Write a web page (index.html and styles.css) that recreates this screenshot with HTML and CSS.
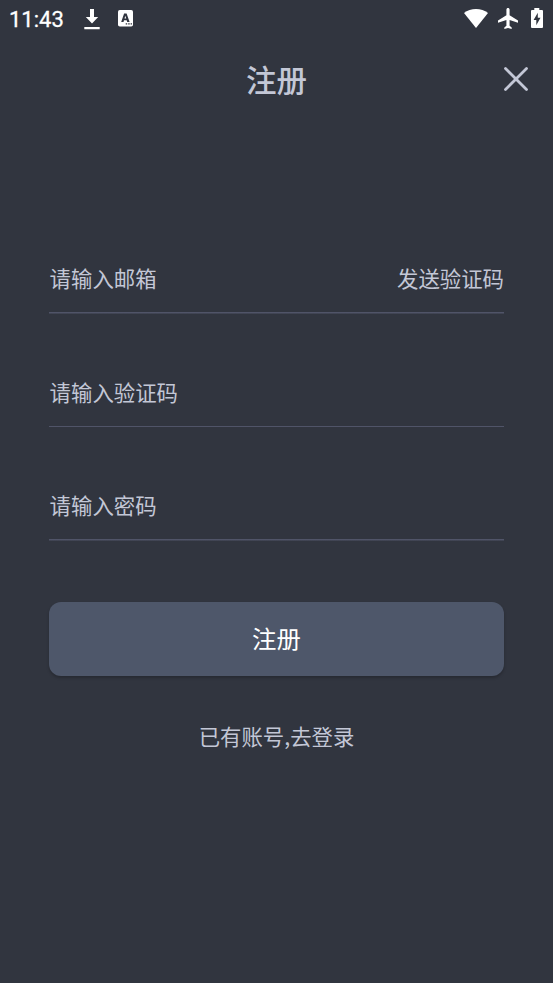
FILE: index.html
```html
<!DOCTYPE html>
<html lang="zh-CN">
<head>
<meta charset="utf-8">
<title>注册</title>
<link rel="stylesheet" href="styles.css">
</head>
<body>
<div class="status">
  <span class="time">11:43</span>
  <svg class="download" width="16" height="21" viewBox="0 0 16 21"><path d="M6 0h4v8h4.200L8 14.500 1.800 8H6zM.3 18h15.400v2.200H.3z"/></svg>
  <svg class="input-badge" width="15" height="17" viewBox="0 0 15 17"><rect width="15" height="16.600" rx="1.800"/><path class="cut" fill-rule="evenodd" d="M6.100 3.500h2.500l3 8.500H9.200l-.5-1.700H6L5.500 12H3.200zM7.300 5.800L6.500 8.600h1.700z"/><path class="cut" d="M7.700 13.300h1.500v1.300H7.700zm2.500 0h1.500v1.300h-1.500zm2.400 0H14v1.300h-1.400z"/></svg>
  <svg class="wifi" width="24" height="19" viewBox="0 0 24 19"><path d="M0 4C6.500-1.200 17.500-1.200 24 4L12 19z"/></svg>
  <svg class="plane" width="20" height="21" viewBox="2 2 19 20" preserveAspectRatio="none"><path d="M21 16v-2l-8-5V3.500C13 2.670 12.330 2 11.500 2S10 2.670 10 3.500V9l-8 5v2l8-2.500V19l-2 1.500V22l3.500-1 3.500 1v-1.500L13 19v-5.500z"/></svg>
  <svg class="battery" width="12" height="20" viewBox="0 0 12 20"><path d="M3.300 0h5v2H11q1 0 1 1v16q0 1-1 1H1q-1 0-1-1V3q0-1 1-1h2.300z"/><path class="cut" d="M6.800 4.800L2.600 12h2.700v5.300L9.500 9.800H6.800z"/></svg>
</div>
<header class="header">
  <h1>注册</h1>
  <svg class="close" width="26" height="26" viewBox="0 0 26 26"><path d="M2.500 2.500l21 21M23.500 2.500l-21 21"/></svg>
</header>
<main class="form">
  <div class="field"><span>请输入邮箱</span><span>发送验证码</span></div>
  <div class="field"><span>请输入验证码</span></div>
  <div class="field"><span>请输入密码</span></div>
  <button class="submit">注册</button>
  <a class="login">已有账号,去登录</a>
</main>
</body>
</html>
```
FILE: styles.css
```css
* { box-sizing: border-box; }
body {
  margin: 0;
  height: 983px;
  overflow: hidden;
  background: #31353f;
  color: #c3c7d6;
  font-family: "Noto Sans CJK SC", sans-serif;
}
.status {
  display: flex;
  align-items: flex-start;
  height: 39px;
  padding: 8px 10px 0 9px;
  fill: #fff;
}
.status svg { flex: none; }
.time {
  width: 75px;
  color: #fff;
  font: 400 22px/23px Roboto, sans-serif;
  -webkit-text-stroke: .3px #fff;
}
.download { margin-top: 1px; }
.input-badge { margin: 2px 0 0 18px; }
.cut { fill: #31353f; }
.wifi { margin: 1px 0 0 auto; }
.plane { margin-left: 10px; }
.battery { margin-left: 13px; }
.header {
  display: grid;
  grid-template-columns: 80px 1fr 80px;
  align-items: center;
  height: 80px;
}
.header h1 {
  grid-column: 2;
  margin: 0;
  text-align: center;
  font-size: 30.500px;
  line-height: 44px;
  font-weight: 500;
}
.close {
  justify-self: end;
  margin-right: 24px;
  fill: none;
  stroke: #c3c7d6;
  stroke-width: 2.800;
  stroke-linecap: round;
}
.form {
  display: flex;
  flex-direction: column;
  padding: 127px 49px 0;
}
.field {
  display: flex;
  justify-content: space-between;
  height: 67.500px;
  margin-bottom: 46.200px;
  padding: 16px 0 0 .6px;
  background: linear-gradient(#505468, #505468) bottom / 100% 1.500px no-repeat;
  font-size: 21.400px;
  line-height: 32px;
}
.submit {
  height: 74px;
  margin-top: 14.900px;
  padding: 0 0 1px;
  border: 0;
  border-radius: 12px;
  background: #4e576a;
  box-shadow: 0 2px 3px rgba(0, 0, 0, .22);
  color: #fff;
  font: 400 24.400px/36px "Noto Sans CJK SC", sans-serif;
}
.login {
  margin-top: 44.500px;
  text-align: center;
  font-size: 21.400px;
  line-height: 32px;
}
```
